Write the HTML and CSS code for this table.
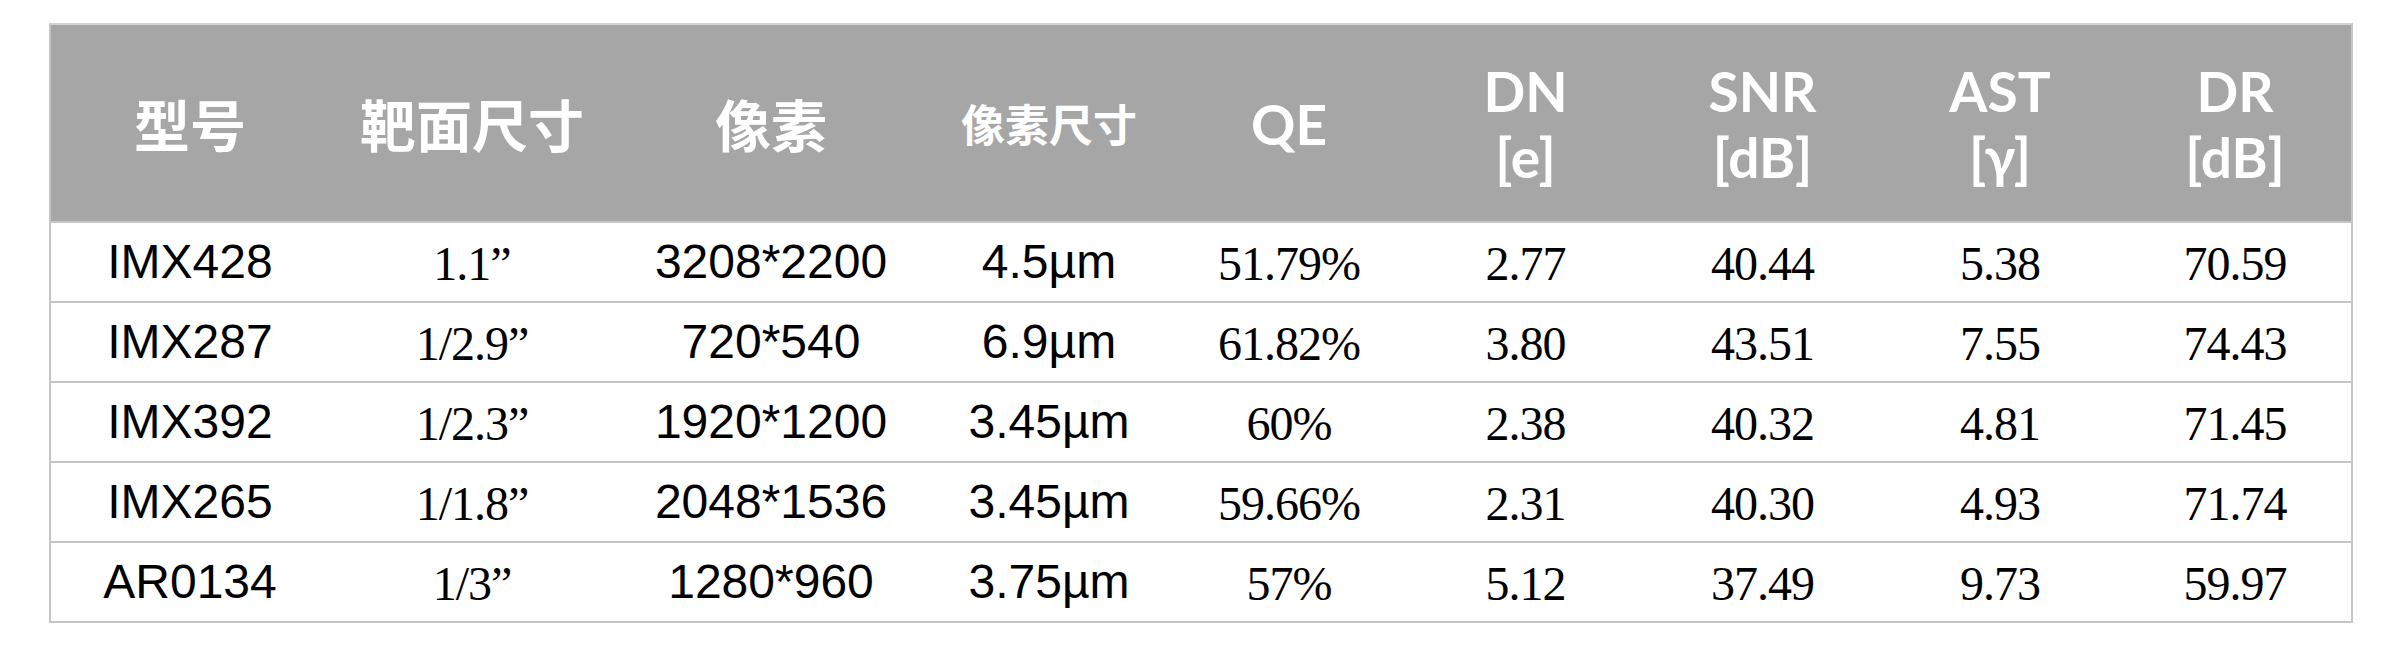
FILE: index.html
```html
<!DOCTYPE html>
<html lang="zh">
<head>
<meta charset="utf-8">
<title>传感器参数</title>
<link rel="stylesheet" href="styles.css">
</head>
<body>
<table class="spec">
  <colgroup>
    <col class="c1"><col class="c2"><col class="c3"><col class="c4"><col class="c5"><col class="c6"><col class="c7"><col class="c8"><col class="c9">
  </colgroup>
  <thead>
    <tr>
      <th class="zh">型号</th>
      <th class="zh">靶面尺寸</th>
      <th class="zh">像素</th>
      <th class="zh small">像素尺寸</th>
      <th class="en">QE</th>
      <th class="en"><span class="ln">DN</span><span class="ln">[e]</span></th>
      <th class="en"><span class="ln">SNR</span><span class="ln">[dB]</span></th>
      <th class="en"><span class="ln">AST</span><span class="ln">[γ]</span></th>
      <th class="en"><span class="ln">DR</span><span class="ln">[dB]</span></th>
    </tr>
  </thead>
  <tbody>
    <tr><td class="s">IMX428</td><td class="r">1.1”</td><td class="s">3208*2200</td><td class="s">4.5µm</td><td class="r">51.79%</td><td class="r">2.77</td><td class="r">40.44</td><td class="r">5.38</td><td class="r">70.59</td></tr>
    <tr><td class="s">IMX287</td><td class="r">1/2.9”</td><td class="s">720*540</td><td class="s">6.9µm</td><td class="r">61.82%</td><td class="r">3.80</td><td class="r">43.51</td><td class="r">7.55</td><td class="r">74.43</td></tr>
    <tr><td class="s">IMX392</td><td class="r">1/2.3”</td><td class="s">1920*1200</td><td class="s">3.45µm</td><td class="r">60%</td><td class="r">2.38</td><td class="r">40.32</td><td class="r">4.81</td><td class="r">71.45</td></tr>
    <tr><td class="s">IMX265</td><td class="r">1/1.8”</td><td class="s">2048*1536</td><td class="s">3.45µm</td><td class="r">59.66%</td><td class="r">2.31</td><td class="r">40.30</td><td class="r">4.93</td><td class="r">71.74</td></tr>
    <tr><td class="s">AR0134</td><td class="r">1/3”</td><td class="s">1280*960</td><td class="s">3.75µm</td><td class="r">57%</td><td class="r">5.12</td><td class="r">37.49</td><td class="r">9.73</td><td class="r">59.97</td></tr>
  </tbody>
</table>
</body>
</html>
```

FILE: styles.css
```css
html, body {
  margin: 0;
  padding: 0;
  background: #ffffff;
}

body {
  padding: 23px 0 0 49px;
}

.spec {
  width: 2304px;
  table-layout: fixed;
  border-collapse: separate;
  border-spacing: 0;
  border-top: 2px solid #d2d2d2;
  border-left: 2px solid #c6c6c6;
  border-right: 2px solid #c6c6c6;
  border-bottom: 2px solid #c6c6c6;
}

.c1 { width: 278px; }
.c2 { width: 286px; }
.c3 { width: 312px; }
.c4 { width: 244px; }
.c5 { width: 236px; }
.c6 { width: 237px; }
.c7 { width: 237px; }
.c8 { width: 238px; }
.c9 { width: 232px; }

.spec thead tr {
  height: 196px;
}

.spec th {
  background: #a6a6a6;
  color: #ffffff;
  padding: 0;
  text-align: center;
  vertical-align: middle;
  font-family: "Noto Sans CJK SC", "Noto Sans", sans-serif;
  font-weight: 700;
}

.spec th.zh {
  font-size: 56px;
  line-height: 66px;
}

.spec th.small {
  font-size: 44px;
}

.spec th.en {
  font-family: Lato, "Noto Sans", sans-serif;
  font-size: 55px;
  line-height: 66px;
  padding-top: 2px;
}

.spec th .ln {
  display: block;
  height: 66px;
  line-height: 66px;
}

.spec tbody tr {
  height: 80px;
}

.spec td {
  padding: 0;
  text-align: center;
  vertical-align: middle;
  color: #000000;
  border-top: 2px solid #c6c6c6;
  line-height: 56px;
}

.spec td.s {
  font-family: "Liberation Sans", Arial, sans-serif;
  font-size: 48px;
}

.spec td.r {
  font-family: "Liberation Serif", "Times New Roman", serif;
  font-size: 48px;
  letter-spacing: -1px;
  padding-top: 4px;
}
```
